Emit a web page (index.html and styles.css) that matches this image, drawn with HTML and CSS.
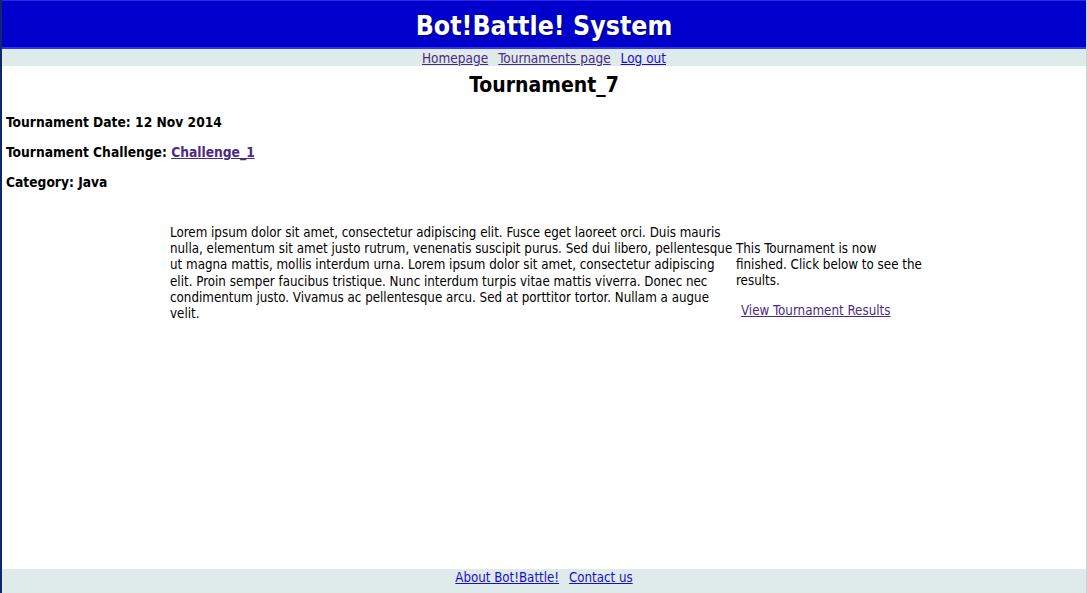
FILE: index.html
```html
<!DOCTYPE html>
<html>
<head>
<meta charset="utf-8">
<title>Bot!Battle! System</title>
<link rel="stylesheet" href="styles.css">
</head>
<body>
<div class="page">
  <header class="banner">
    <h1 class="brand">Bot!Battle! System</h1>
  </header>
  <nav class="topnav">
    <a class="visited" href="#">Homepage</a>
    <a class="visited" href="#">Tournaments page</a>
    <a href="#">Log out</a>
  </nav>
  <main class="main">
    <h2 class="title">Tournament_7</h2>
    <p class="info">Tournament Date: 12 Nov 2014</p>
    <p class="info">Tournament Challenge: <a class="visited" href="#">Challenge_1</a></p>
    <p class="info">Category: Java</p>
    <div class="details">
      <p class="desc">Lorem ipsum dolor sit amet, consectetur adipiscing elit. Fusce eget laoreet orci. Duis mauris nulla, elementum sit amet justo rutrum, venenatis suscipit purus. Sed dui libero, pellentesque ut magna mattis, mollis interdum urna. Lorem ipsum dolor sit amet, consectetur adipiscing elit. Proin semper faucibus tristique. Nunc interdum turpis vitae mattis viverra. Donec nec condimentum justo. Vivamus ac pellentesque arcu. Sed at porttitor tortor. Nullam a augue velit.</p>
      <div class="status">
        <p class="status-text">This Tournament is now finished. Click below to see the results.</p>
        <a class="visited results" href="#">View Tournament Results</a>
      </div>
    </div>
  </main>
  <footer class="footer">
    <a href="#">About Bot!Battle!</a>
    <a href="#">Contact us</a>
  </footer>
</div>
</body>
</html>
```

FILE: styles.css
```css
html, body {
  margin: 0;
  padding: 0;
  height: 100%;
}
body {
  font-family: "DejaVu Sans Condensed", "DejaVu Sans", sans-serif;
  font-size: 13.25px;
  color: #000;
  background: #fff;
}
.page {
  height: 593px;
  display: flex;
  flex-direction: column;
  border-left: 2px solid #0a2a6a;
  border-right: 2px solid #d4d4d4;
  box-sizing: border-box;
}
a { color: #1a0dcc; }
a.visited { color: #4b2b82; }
.banner {
  background: #0000cc;
  border-top: 1px solid #2a2ae6;
  border-bottom: 2px solid #3434e4;
  height: 46px;
  display: flex;
  align-items: center;
  justify-content: center;
}
.brand {
  margin: 2px 0 0;
  color: #fff;
  font-size: 26.5px;
  font-weight: bold;
  text-shadow: 1px 1px 1px #000066;
}
.topnav {
  background: #dfeaea;
  height: 17px;
  display: flex;
  justify-content: center;
  gap: 10px;
  font-size: 13.5px;
  line-height: 18px;
}
.main {
  flex: 1;
  padding: 0 4px;
}
.title {
  margin: 6px 0 0;
  text-align: center;
  font-size: 21px;
  line-height: 26px;
}
.info {
  font-weight: bold;
  font-size: 13.7px;
  margin: 14px 0 0;
  line-height: 16px;
}
.title + .info { margin-top: 16px; }
.details {
  display: flex;
  align-items: flex-start;
  margin: 35px 0 0 164px;
  width: 760px;
}
.desc {
  margin: 0;
  width: 566px;
  flex-shrink: 0;
  line-height: 16.2px;
}
.status {
  width: 192px;
  margin-top: 16px;
  line-height: 16px;
}
.status-text { margin: 0; }
.results {
  display: inline-block;
  margin: 14px 0 0 5px;
}
.footer {
  background: #dfeaea;
  height: 24px;
  box-sizing: border-box;
  padding-top: 1px;
  display: flex;
  justify-content: center;
  align-items: flex-start;
  gap: 10px;
  font-size: 13.2px;
  line-height: 16px;
}
```
